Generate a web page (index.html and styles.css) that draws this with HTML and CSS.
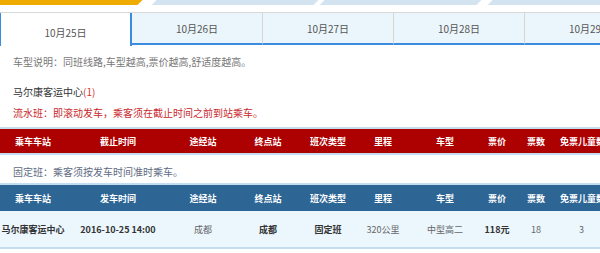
FILE: index.html
```html
<!DOCTYPE html>
<html lang="zh-CN">
<head>
<meta charset="utf-8">
<title>班次查询</title>
<link rel="stylesheet" href="styles.css">
</head>
<body>
<div class="page">
  <div class="strip">
    <span class="seg seg-orange"></span>
    <span class="seg seg-blue seg-b1"></span>
    <span class="seg seg-blue seg-b2"></span>
    <span class="seg seg-blue seg-b3"></span>
  </div>
  <div class="tabs">
    <div class="tab active">10月25日</div>
    <div class="tab">10月26日</div>
    <div class="tab">10月27日</div>
    <div class="tab">10月28日</div>
    <div class="tab">10月29日</div>
  </div>
  <p class="note">车型说明：同班线路,车型越高,票价越高,舒适度越高。</p>
  <p class="station">马尔康客运中心<span class="count">(1)</span></p>
  <p class="notice notice-red">流水班：即滚动发车，乘客须在截止时间之前到站乘车。</p>
  <div class="grid grid-red">
    <div class="th">乘车车站</div>
    <div class="th">截止时间</div>
    <div class="th">途经站</div>
    <div class="th">终点站</div>
    <div class="th">班次类型</div>
    <div class="th">里程</div>
    <div class="th">车型</div>
    <div class="th">票价</div>
    <div class="th">票数</div>
    <div class="th">免票儿童数</div>
  </div>
  <p class="notice notice-fixed">固定班：乘客须按发车时间准时乘车。</p>
  <div class="grid grid-blue">
    <div class="th">乘车车站</div>
    <div class="th">发车时间</div>
    <div class="th">途经站</div>
    <div class="th">终点站</div>
    <div class="th">班次类型</div>
    <div class="th">里程</div>
    <div class="th">车型</div>
    <div class="th">票价</div>
    <div class="th">票数</div>
    <div class="th">免票儿童数</div>
    <div class="td b">马尔康客运中心</div>
    <div class="td b">2016-10-25 14:00</div>
    <div class="td">成都</div>
    <div class="td b">成都</div>
    <div class="td b">固定班</div>
    <div class="td">320公里</div>
    <div class="td">中型高二</div>
    <div class="td b">118元</div>
    <div class="td">18</div>
    <div class="td">3</div>
  </div>
</div>
</body>
</html>
```
FILE: styles.css
```css
html, body {
  margin: 0;
  padding: 0;
  background: #ffffff;
}
body {
  width: 600px;
  height: 253px;
  overflow: hidden;
  font-family: "Noto Sans CJK SC", "Noto Sans", sans-serif;
}
.page {
  width: 680px;
}
.strip {
  display: flex;
  height: 5px;
  margin-bottom: 7px;
  overflow: hidden;
}
.seg {
  display: block;
  height: 5px;
  transform: skewX(-45deg);
  flex: none;
}
.seg-orange {
  background: #f0ab00;
  width: 150px;
  margin-left: -10px;
}
.seg-blue {
  background: #d3e4f0;
}
.seg-b1 {
  width: 162px;
  margin-left: 14px;
}
.seg-b2 {
  width: 157px;
  margin-left: 6px;
}
.seg-b3 {
  width: 220px;
  margin-left: 11px;
}
.tabs {
  display: flex;
  border-top: 1px solid #d9d9d9;
  height: 33px;
}
.tab {
  flex: none;
  box-sizing: border-box;
  width: 131px;
  height: 32px;
  padding-top: 9px;
  line-height: 14px;
  font-size: 10px;
  color: #555555;
  text-align: center;
  background: #ebf6fc;
  border-right: 1px solid #d6d6d6;
  border-bottom: 2px solid #3b8be0;
}
.tab.active {
  width: 132px;
  height: 33px;
  padding-top: 13px;
  background: #ffffff;
  border-left: 1px solid #3b8be0;
  border-right: 2px solid #3b8be0;
  border-bottom: none;
}
p {
  margin: 0;
  padding-left: 13px;
  font-size: 10px;
  line-height: 14px;
}
.note {
  margin-top: 9px;
  color: #777777;
}
.station {
  margin-top: 16px;
  color: #333333;
}
.count {
  color: #d9302c;
}
.notice-red {
  margin-top: 7px;
  color: #c8282c;
}
.notice-fixed {
  margin-top: 10px;
  color: #5d6a82;
}
.grid {
  display: grid;
  grid-template-columns: 66px 104px 66px 64px 56px 54px 70px 34px 44px 46px 76px;
  border-top: 2px solid #c3ddf0;
  border-bottom: 2px solid #c3ddf0;
}
.grid-red {
  margin-top: 7px;
  background: #ad0000;
}
.grid-red .th {
  height: 24px;
}
.grid-blue {
  margin-top: 4px;
  background: #ebf6fd;
}
.grid-blue .th {
  height: 26px;
  background: #2d6595;
}
.th {
  display: flex;
  align-items: center;
  justify-content: center;
  white-space: nowrap;
  font-size: 9px;
  font-weight: bold;
  color: #ffffff;
}
.grid-blue .th:nth-child(10) {
  grid-column: span 2;
  justify-content: flex-start;
  padding-left: 2px;
}
.grid-red .th:nth-child(10) {
  grid-column: span 2;
  justify-content: flex-start;
  padding-left: 2px;
}
.td {
  height: 36px;
  display: flex;
  align-items: center;
  justify-content: center;
  white-space: nowrap;
  font-size: 9px;
  color: #666666;
}
.td:last-child {
  grid-column: span 2;
  justify-content: flex-start;
  padding-left: 21px;
}
.td.b {
  font-weight: bold;
  color: #333333;
}
```
